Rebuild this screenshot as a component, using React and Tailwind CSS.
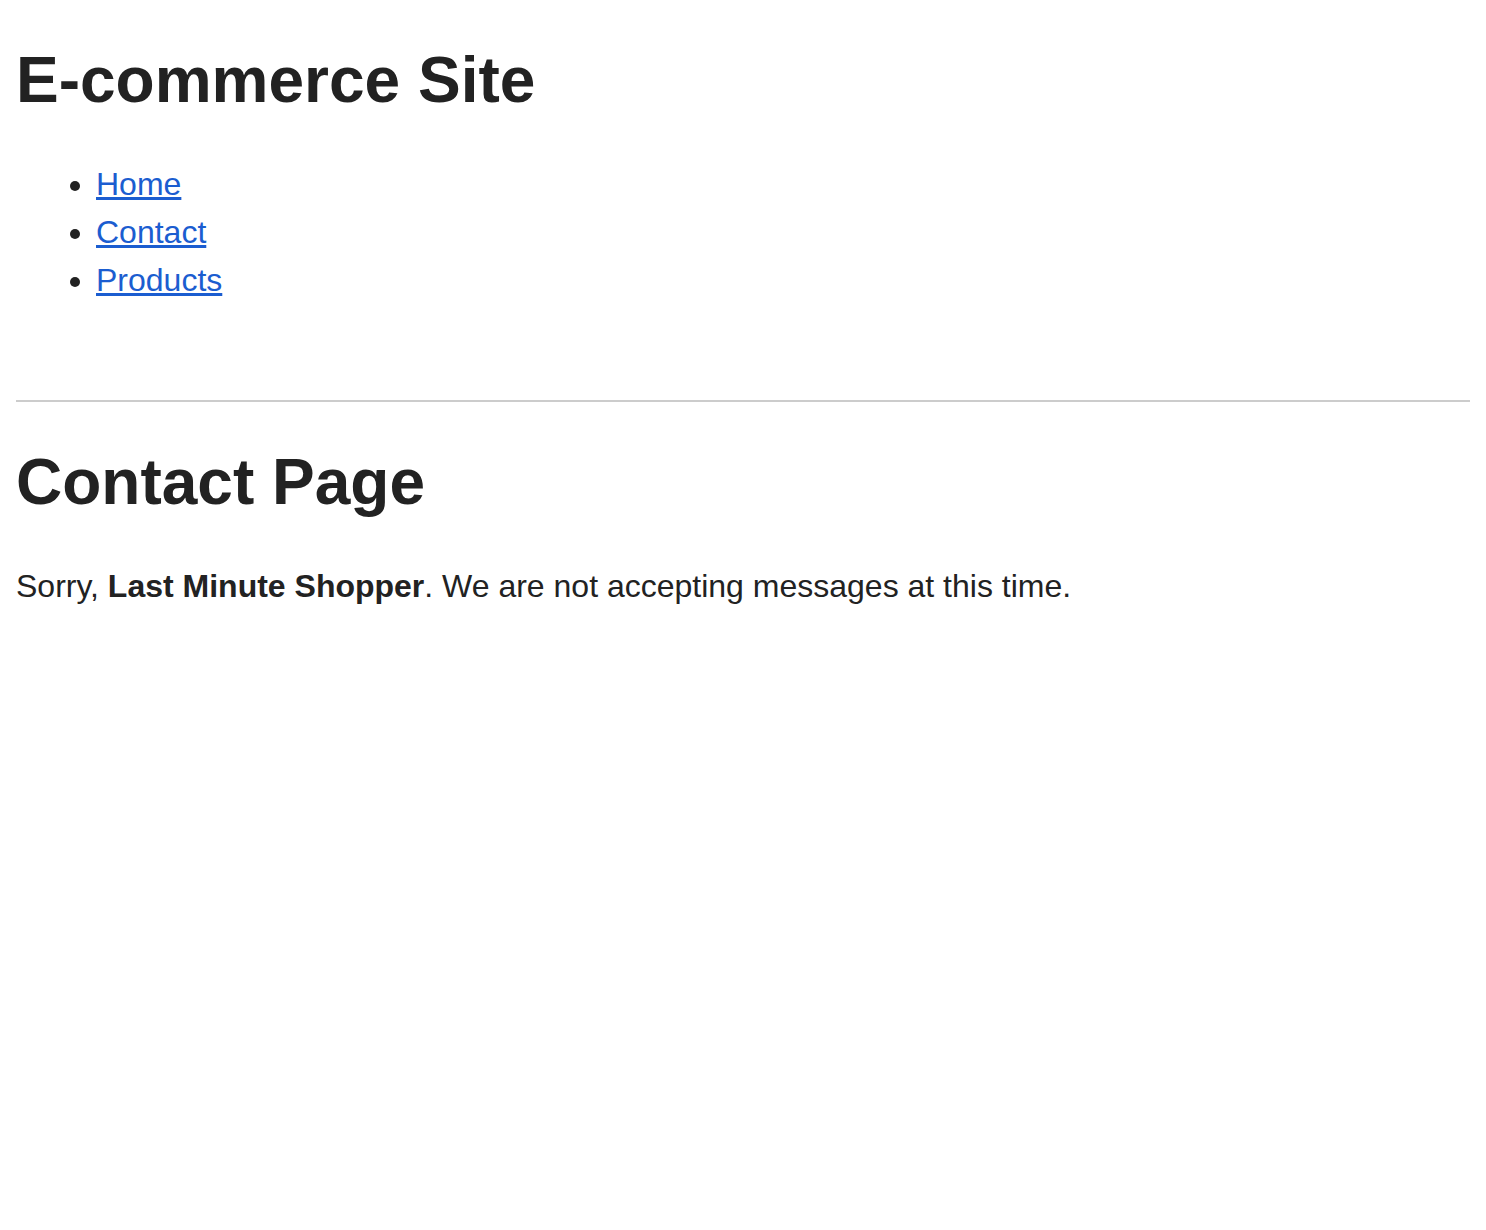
export default function App() {
    const links = ['Home', 'Contact', 'Products'];

    return (
        <div className="px-4 text-[#222] font-['Liberation_Sans',Arial,sans-serif] text-[32px] leading-[48px]">
            <header>
                <h1 className="text-[64px] font-bold leading-[1.2] mt-[42px] mb-[41px]">E-commerce Site</h1>
                <nav>
                    <ul className="list-disc pl-[80px] mb-[96px]">
                        {links.map((link) => (
                            <li key={link}>
                                <a href="#" className="text-[#1b5dd0] underline">
                                    {link}
                                </a>
                            </li>
                        ))}
                    </ul>
                </nav>
            </header>

            <hr className="border-0 border-t-2 border-[#cccccc]" />

            <main>
                <h2 className="text-[64px] font-bold leading-[1.2] mt-[42px] mb-[41px]">Contact Page</h2>
                <p>
                    Sorry, <strong className="font-bold">Last Minute Shopper</strong>. We are not accepting
                    messages at this time.
                </p>
            </main>
        </div>
    );
}
